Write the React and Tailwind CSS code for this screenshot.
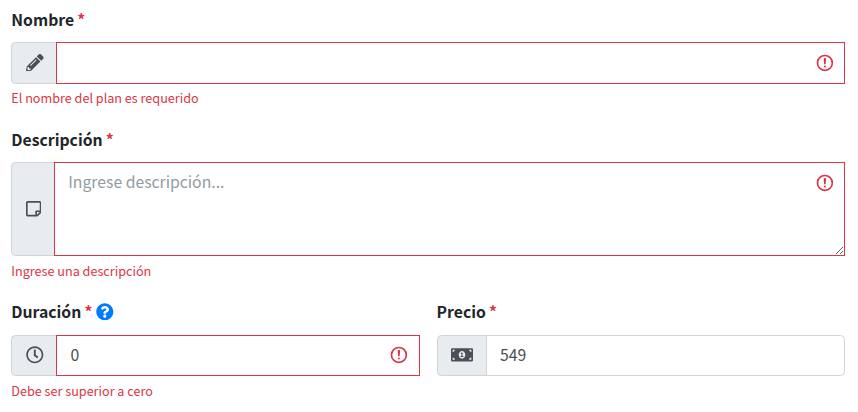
import React from "react";
import {
  FaPencilAlt,
  FaRegStickyNote,
  FaRegClock,
  FaMoneyBillAlt,
  FaQuestionCircle,
} from "react-icons/fa";

function Label({ children, help }) {
  return (
    <div className="mb-[8.8px] flex h-[26.4px] items-center text-[15.75px] leading-[26.4px] font-bold text-[#212529]">
      <span className="whitespace-pre">{children} </span>
      <span className="-ml-[0.5px] text-[#dc3545]">*</span>
      {help && <FaQuestionCircle className="mb-[2px] ml-[3.9px] size-[17.6px] text-[#007bff]" />}
    </div>
  );
}

function Addon({ children }) {
  return (
    <div className="-mr-px flex items-center rounded-l-[4.4px] border border-[#ced4da] bg-[#e9ecef] pr-[12.7px] pb-[0.8px] pl-[13.7px] text-[17.6px] text-[#495057]">
      {children}
    </div>
  );
}

function InvalidIcon() {
  return (
    <svg
      className="pointer-events-none absolute top-[10.9px] right-[10.6px] size-[19.8px]"
      viewBox="0 0 12 12"
      fill="none"
      stroke="#dc3545"
    >
      <circle cx="6" cy="6" r="4.5" />
      <path strokeLinejoin="round" d="M5.8 3.6h.4L6 6.5z" />
      <circle cx="6" cy="8.2" r=".6" fill="#dc3545" stroke="none" />
    </svg>
  );
}

function Feedback({ children, spacing = "mt-[4.4px]" }) {
  return (
    <div className={`${spacing} h-[21.1px] text-[12.63px] leading-[20.3px] text-[#dc3545]`}>
      {children}
    </div>
  );
}

const control =
  "block w-full border bg-white px-[13.2px] text-[15.75px] leading-[26.4px] text-[#495057] outline-none placeholder:text-[#939ba2]";

export default function App() {
  return (
    <form className="h-[412px] overflow-hidden bg-white pt-[6.8px] pr-[13px] pl-[11.3px] font-['Noto_Sans_CJK_SC',sans-serif]">
      <div className="mb-[17.6px]">
        <Label>Nombre</Label>
        <div className="flex h-[41.6px]">
          <Addon>
            <FaPencilAlt />
          </Addon>
          <div className="relative flex-1">
            <input className={`${control} h-full border-[#dc3545]`} />
            <InvalidIcon />
          </div>
        </div>
        <Feedback>El nombre del plan es requerido</Feedback>
      </div>

      <div className="mb-[17.6px]">
        <Label>Descripción</Label>
        <div className="flex h-[94.4px]">
          <Addon>
            <FaRegStickyNote className="w-[15.4px]" />
          </Addon>
          <div className="relative flex-1">
            <textarea
              className={`${control} h-full resize-y border-[#dc3545] py-[6.6px]`}
              placeholder="Ingrese descripción..."
            />
            <InvalidIcon />
          </div>
        </div>
        <Feedback>Ingrese una descripción</Feedback>
      </div>

      <div className="grid grid-cols-2 gap-[16.8px]">
        <div>
          <Label help>Duración</Label>
          <div className="flex h-[41.6px]">
            <Addon>
              <FaRegClock />
            </Addon>
            <div className="relative flex-1">
              <input className={`${control} h-full border-[#dc3545] pt-[6px] pb-[7.2px]`} defaultValue="0" />
              <InvalidIcon />
            </div>
          </div>
          <Feedback spacing="mt-[5.2px]">Debe ser superior a cero</Feedback>
        </div>
        <div>
          <Label>Precio</Label>
          <div className="flex h-[41.6px]">
            <Addon>
              <FaMoneyBillAlt className="w-[22px]" />
            </Addon>
            <div className="flex-1">
              <input
                className={`${control} h-full rounded-r-[4.4px] border-[#ced4da] pt-[6px] pb-[7.2px]`}
                defaultValue="549"
              />
            </div>
          </div>
        </div>
      </div>
    </form>
  );
}
